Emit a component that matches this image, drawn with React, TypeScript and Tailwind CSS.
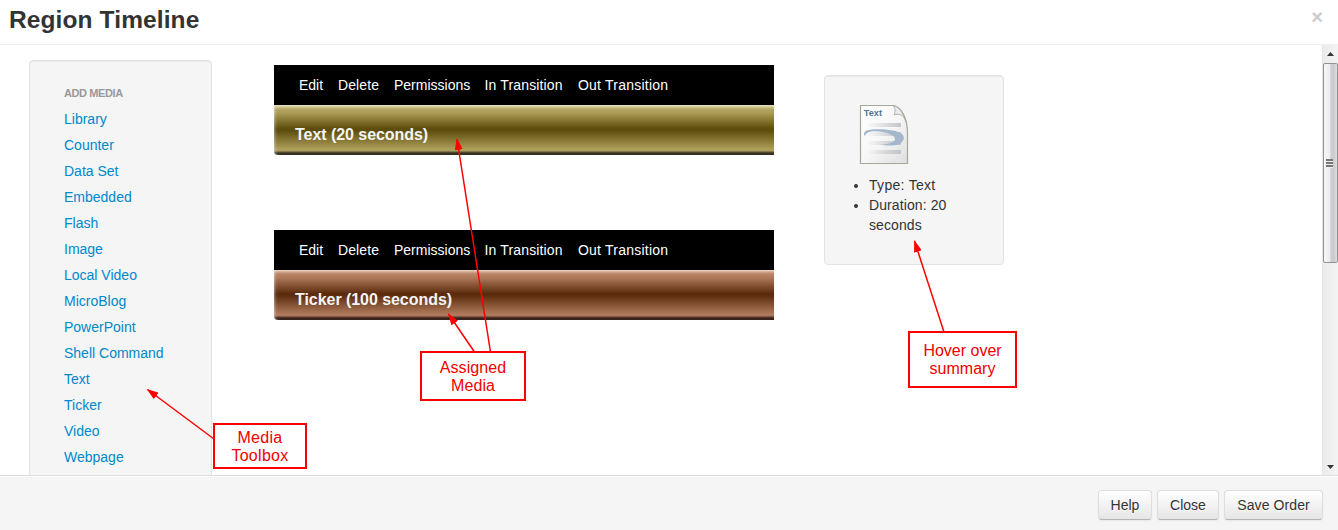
import React from "react";

const mediaTypes = [
  "Library", "Counter", "Data Set", "Embedded", "Flash", "Image", "Local Video",
  "MicroBlog", "PowerPoint", "Shell Command", "Text", "Ticker", "Video", "Webpage",
];

const actions = [
  { label: "Edit", style: "w-[39px]" },
  { label: "Delete", style: "w-[56px] tracking-[0.1px]" },
  { label: "Permissions", style: "w-[90.500px]" },
  { label: "In Transition", style: "w-[93.500px] tracking-[0.15px]" },
  { label: "Out Transition", style: "w-[100px] tracking-[0.22px]" },
];

const gold =
  "bg-[linear-gradient(to_bottom,#e9e3c4_0px,#d2c793_2px,#b5a764_4px,#aa9b57_8px,#5b4c0a_24px,#5f5010_26px,#b0a15d_45px,#a3955a_46px,#625938_47px,#3b3422_48px,#32291b_50px)]";
const copper =
  "bg-[linear-gradient(to_bottom,#efd9cc_0px,#cfa78f_2px,#b98567_4px,#ab7858_8px,#5a290b_24px,#5e2e10_26px,#b27d5e_45px,#a27156_46px,#633f30_47px,#3d2620_48px,#301b17_50px)]";

function MediaItem({ title, fill }: { title: string; fill: string }) {
  return (
    <section className="h-[90px] w-[500px]">
      <nav className="flex h-10 items-center bg-black pl-[25px] text-sm text-white">
        {actions.map((a) => (
          <a key={a.label} className={`shrink-0 whitespace-nowrap ${a.style}`}>{a.label}</a>
        ))}
      </nav>
      <div className={`h-[50px] rounded-bl-[4px] pl-[21px] pt-[20px] shadow-[inset_3px_0_3px_-2px_rgba(255,255,255,0.45)] ${fill}`}>
        <h4 className="text-[16px] font-bold leading-[20px] tracking-[-0.05px] text-[#f5f5f5]">{title}</h4>
      </div>
    </section>
  );
}

function TextDocument() {
  return (
    <svg width="50" height="62" viewBox="0 0 50 62" className="block">
      <defs>
        <linearGradient id="paper" x1="0" y1="0" x2="1" y2="1">
          <stop offset="0" stopColor="#fff" />
          <stop offset="0.5" stopColor="#f7f7f7" />
          <stop offset="1" stopColor="#dedede" />
        </linearGradient>
        <linearGradient id="line" x1="0" y1="0" x2="1" y2="0">
          <stop offset="0" stopColor="#c5c6ca" stopOpacity="0" />
          <stop offset="1" stopColor="#c3c4c9" />
        </linearGradient>
      </defs>
      <path d="M1.500 1.500H34C42 2.500 48 13 48.500 28V59.500H1.500Z" fill="url(#paper)" stroke="#a5a79b" strokeWidth="1.200" />
      <path d="M34 1.500C36.500 4 36.500 7 35 11C40 9 45 11 47 18C44 8 39.500 2.500 34 1.500Z" fill="#ececec" stroke="#a6a89d" strokeWidth="0.900" />
      <g fill="url(#line)">
        <rect x="8" y="19" width="34" height="4" />
        <rect x="8" y="28" width="34" height="4" />
        <rect x="8" y="37" width="34" height="4" />
        <rect x="8" y="46" width="34" height="4" />
      </g>
      <path d="M6 32.300C3.500 29 6 26.500 11 25.800C23 24.500 38 26 43 30C46 33 45.500 37 40.500 40C35 42 27 42 21 40.500C28 40.500 35 39 36 35.500C36.500 32 31 29.500 24 28C16 26.500 7 26.500 6 32.300Z" fill="#a3b7cd" />
      <text x="4.800" y="12" fontFamily="Liberation Sans, Arial, sans-serif" fontSize="9.200" fontWeight="700" fill="#567590">Text</text>
    </svg>
  );
}

function Callout({ lines, box }: { lines: string[]; box: string }) {
  return (
    <div className={`absolute flex flex-col items-center border-2 border-[#f00] bg-white text-[16px] leading-[18px] text-[#f00000] ${box}`}>
      {lines.map((l) => <span key={l}>{l}</span>)}
    </div>
  );
}

function Arrows() {
  return (
    <svg className="pointer-events-none absolute left-0 top-0" width="1338" height="530" viewBox="0 0 1338 530">
      <defs>
        <marker id="head" viewBox="0 0 12 8" refX="11" refY="4" markerWidth="12" markerHeight="8" markerUnits="userSpaceOnUse" orient="auto">
          <path d="M0 0L12 4L0 8Z" fill="#f00" />
        </marker>
      </defs>
      <g stroke="#f00" strokeWidth="1.5">
        <path d="M490.500 352L457 139" markerEnd="url(#head)" />
        <path d="M474.500 352L448.500 314" markerEnd="url(#head)" />
        <path d="M214 439L147.500 389.500" markerEnd="url(#head)" />
        <path d="M944 332L914.500 241" markerEnd="url(#head)" />
      </g>
    </svg>
  );
}

function Scrollbar() {
  return (
    <div className="flex w-4 shrink-0 flex-col border-l border-[#e4e4e4] bg-[linear-gradient(to_right,#ebebeb,#f3f3f3)]">
      <div className="flex h-[18px] items-center justify-center">
        <svg width="7" height="4" viewBox="0 0 7 4"><path d="M0 4L3.500 0L7 4Z" fill="#333" /></svg>
      </div>
      <div className="flex h-[200px] items-center justify-center rounded-[2px] border border-[#929292] bg-[linear-gradient(to_right,#f7f7f7_0%,#ededee_42%,#d0d1d6_52%,#c8c9cf_75%,#dedfe2_100%)]">
        <svg width="8" height="9" viewBox="0 0 8 9" shapeRendering="crispEdges" className="-translate-x-px">
          <path d="M0 1H7M0 4H7M0 7H7" stroke="#777" strokeWidth="2" />
          <path d="M0 2.500H7M0 5.500H7M0 8.500H7" stroke="#eee" />
        </svg>
      </div>
      <div className="flex flex-1 items-end justify-center pb-[6px]">
        <svg width="7" height="4" viewBox="0 0 7 4"><path d="M0 0H7L3.500 4Z" fill="#333" /></svg>
      </div>
    </div>
  );
}

function Button({ children, style }: { children: React.ReactNode; style: string }) {
  return (
    <button className={`h-[30px] rounded-[4px] border border-[#ddd] border-b-[#b3b3b3] bg-gradient-to-b from-white to-[#e6e6e6] text-sm leading-5 text-[#333] shadow-[inset_0_1px_0_rgba(255,255,255,0.2),0_1px_2px_rgba(0,0,0,0.05)] [text-shadow:0_1px_1px_rgba(255,255,255,0.75)] ${style}`}>
      {children}
    </button>
  );
}

export default function App() {
  return (
    <div className="relative flex h-[530px] w-[1338px] flex-col overflow-hidden bg-white font-['Liberation_Sans',Arial,sans-serif] text-sm text-[#333]">
      <header className="flex h-[45px] shrink-0 items-start justify-between border-b border-[#eee] pl-[9px] pr-[15px]">
        <h3 className="pt-[5px] text-[24.5px] font-bold leading-[30px] tracking-[0.11px]">Region Timeline</h3>
        <span className="pt-[7px] text-[20px] font-bold leading-[20px] text-[#ccc]">×</span>
      </header>

      <main className="flex h-[430px] shrink-0 overflow-hidden">
        <div className="flex flex-1 items-start overflow-hidden pl-[29px]">
          <aside className="mt-[15px] h-[500px] w-[183px] shrink-0 rounded-[4px] border border-[#e3e3e3] bg-[#f5f5f5] pl-[34px] pt-[22px] shadow-[inset_0_1px_1px_rgba(0,0,0,0.05)]">
            <h5 className="h-[23px] text-[11px] font-bold uppercase leading-[20px] tracking-[-0.4px] text-[#999]">Add Media</h5>
            <ul>
              {mediaTypes.map((m) => (
                <li key={m} className="h-[26px] leading-[26px] text-[#08c]">{m}</li>
              ))}
            </ul>
          </aside>

          <div className="ml-[62px] mt-5 flex shrink-0 flex-col gap-[75px]">
            <MediaItem title="Text (20 seconds)" fill={gold} />
            <MediaItem title="Ticker (100 seconds)" fill={copper} />
          </div>

          <aside className="ml-[50px] mt-[30px] h-[190px] w-[180px] shrink-0 rounded-[4px] border border-[#e3e3e3] bg-[#f5f5f5] pl-[34px] pt-[28px] shadow-[inset_0_1px_1px_rgba(0,0,0,0.05)]">
            <TextDocument />
            <ul className="ml-[10px] mt-[9px] w-[100px] list-disc leading-5 tracking-[0.1px]">
              <li className="tracking-[0.3px]">Type: Text</li>
              <li>Duration: 20 seconds</li>
            </ul>
          </aside>
        </div>
        <Scrollbar />
      </main>

      <footer className="flex h-[55px] shrink-0 justify-end gap-[5px] border-t border-[#ddd] bg-[#f5f5f5] pr-[15px] pt-[14px] shadow-[inset_0_1px_0_#fff]">
        <Button style="w-[54px]">Help</Button>
        <Button style="w-[62px]">Close</Button>
        <Button style="w-[99px] tracking-[0.1px]">Save Order</Button>
      </footer>

      <Arrows />
      <Callout lines={["Assigned", "Media"]} box="left-[420px] top-[351px] h-[50px] w-[106px] pt-[6px] tracking-[0.1px]" />
      <Callout lines={["Media", "Toolbox"]} box="left-[213px] top-[423px] h-[46px] w-[94px] pt-[4px] tracking-[0.3px]" />
      <Callout lines={["Hover over", "summary"]} box="left-[908px] top-[331px] h-[57px] w-[109px] pt-[9px]" />
    </div>
  );
}
